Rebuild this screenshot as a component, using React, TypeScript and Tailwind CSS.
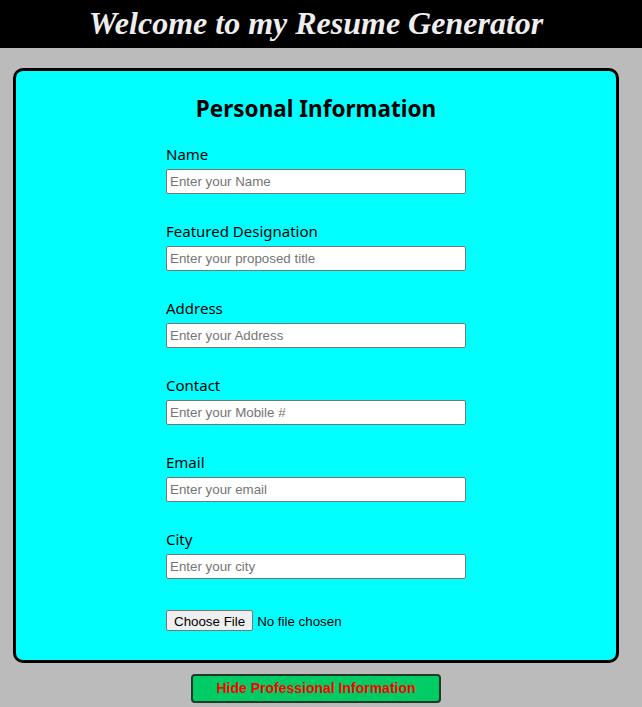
import React from 'react';

const fields = [
  { label: 'Name', placeholder: 'Enter your Name' },
  { label: 'Featured Designation', placeholder: 'Enter your proposed title' },
  { label: 'Address', placeholder: 'Enter your Address' },
  { label: 'Contact', placeholder: 'Enter your Mobile #' },
  { label: 'Email', placeholder: 'Enter your email' },
  { label: 'City', placeholder: 'Enter your city' },
];

const App: React.FC = () => {
  return (
    <div className="min-h-[707px] bg-[#bbbbbb] font-['Noto_Sans',sans-serif]">
      <header className="h-[48px] w-full bg-black">
        <div className="w-[632px] h-full flex items-center justify-center">
          <h1 className="font-['Liberation_Serif',serif] text-[32px] font-bold italic text-[#eeeeee] leading-none pb-[2px]">
            Welcome to my Resume Generator
          </h1>
        </div>
      </header>

      <div className="w-[632px] pt-[20px]">
        <div className="mx-[13px] rounded-[10px] border-[3px] border-black bg-[#00ffff] pt-[22px] pb-[29px]">
          <h2 className="text-center text-[22.5px] font-bold leading-[32px] text-black">Personal Information</h2>

          <form className="ml-[150px] mt-[19px] flex flex-col gap-[27px]">
            {fields.map((f) => (
              <div key={f.label} className="flex flex-col">
                <label className="text-[15px] leading-[21px] text-black mb-[4px]">{f.label}</label>
                <input
                  type="text"
                  placeholder={f.placeholder}
                  className="w-[300px] h-[25px] border border-[#767676] rounded-[2px] bg-white px-[3px] font-['Liberation_Sans',Arial,sans-serif] text-[13.33px] text-black placeholder:text-[#757575] outline-none"
                />
              </div>
            ))}
            <div className="mt-[4px] h-[21px] flex items-center">
              <input
                type="file"
                className="block h-[21px] font-['Liberation_Sans',Arial,sans-serif] text-[13.33px] leading-[21px] text-black file:mr-[4px] file:h-[21px] file:px-[7px] file:border file:border-[#767676] file:rounded-[2px] file:bg-[#efefef] file:text-black"
              />
            </div>
          </form>
        </div>

        <div className="flex justify-center pt-[11px]">
          <button className="w-[250px] h-[29px] rounded-[4px] border-2 border-[#1b3b26] bg-[#00cc66] font-['Liberation_Sans',Arial,sans-serif] text-[14px] font-bold text-[#ff0000]">
            Hide Professional Information
          </button>
        </div>
      </div>
    </div>
  );
};

export default App;
